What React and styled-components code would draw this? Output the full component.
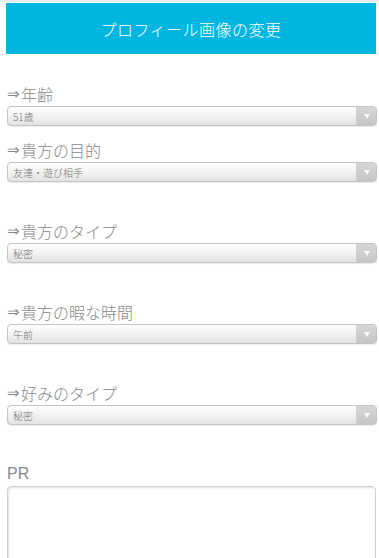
import React from 'react'
import styled, { createGlobalStyle } from 'styled-components'

const GlobalStyle = createGlobalStyle`
  html, body {
    margin: 0;
    padding: 0;
    background: #ffffff;
  }
  body {
    font-family: "Liberation Sans", Arial, "Noto Sans CJK JP", sans-serif;
  }
`;

const fields = [
  { label: '年齢', value: '51歳', spaced: false },
  { label: '貴方の目的', value: '友達・遊び相手', spaced: false },
  { label: '貴方のタイプ', value: '秘密', spaced: true },
  { label: '貴方の暇な時間', value: '午前', spaced: true },
  { label: '好みのタイプ', value: '秘密', spaced: true },
];

function App() {
  return (
    <Page>
      <GlobalStyle />
      <HeaderButton>プロフィール画像の変更</HeaderButton>
      <Form>
        {fields.map((f) => (
          <Field key={f.label} $spaced={f.spaced}>
            <Label>
              <Arrow>⇒</Arrow>
              {f.label}
            </Label>
            <SelectBox>
              <Value>{f.value}</Value>
              <ArrowBox>
                <Triangle />
              </ArrowBox>
            </SelectBox>
          </Field>
        ))}
        <Field $spaced>
          <Label $latin>PR</Label>
          <TextArea />
        </Field>
      </Form>
    </Page>
  )
}

const Page = styled.div`
  border-top: 2px solid #ececec;
  padding: 1px 2px 0 6px;
  min-height: 100vh;
  box-sizing: border-box;
  overflow: hidden;
`;

const HeaderButton = styled.div`
  width: 370px;
  height: 51px;
  background-color: #00b6e0;
  color: #ffffff;
  display: flex;
  align-items: center;
  justify-content: center;
  font-family: "Noto Sans CJK JP", sans-serif;
  font-size: 16px;
  letter-spacing: 0.5px;
  font-weight: 300;
`;

const Form = styled.div`
  display: flex;
  flex-direction: column;
  padding-top: 16px;
  padding-left: 1px;
`;

const Field = styled.div`
  display: flex;
  flex-direction: column;
  margin-top: ${(p) => (p.$spaced ? '38px' : '13px')};
`;

const Label = styled.div`
  display: flex;
  align-items: center;
  height: 22px;
  line-height: 22px;
  font-family: ${(p) =>
    p.$latin ? '"Liberation Sans", Arial, sans-serif' : '"Noto Sans CJK JP", sans-serif'};
  font-size: 16px;
  font-weight: 300;
  color: #888888;
  margin-bottom: 1px;
`;

const Arrow = styled.span`
  font-family: "DejaVu Sans", sans-serif;
  font-size: 15px;
  line-height: 1;
  margin-right: 1px;
`;

const SelectBox = styled.div`
  display: flex;
  height: 20px;
  box-sizing: border-box;
  border: 1px solid #c4c4c4;
  border-radius: 4px;
  overflow: hidden;
  background: linear-gradient(to bottom, #ffffff 0%, #f2f2f2 50%, #e2e2e2 100%);
  box-shadow: 0 1px 1px rgba(0, 0, 0, 0.08);
`;

const Value = styled.div`
  flex: 1;
  display: flex;
  align-items: center;
  padding-left: 5px;
  font-family: "Noto Sans CJK JP", sans-serif;
  font-size: 10px;
  font-weight: 300;
  color: #777777;
`;

const ArrowBox = styled.div`
  width: 19px;
  display: flex;
  align-items: center;
  justify-content: center;
  background: linear-gradient(to bottom, #d6d6d6 0%, #c6c6c6 100%);
  border-left: 1px solid #d0d0d0;
`;

const Triangle = styled.div`
  width: 0;
  height: 0;
  border-left: 3px solid transparent;
  border-right: 3px solid transparent;
  border-top: 5px solid #ffffff;
`;

const TextArea = styled.textarea`
  width: 369px;
  height: 90px;
  box-sizing: border-box;
  border: 1px solid #cfcfcf;
  border-radius: 4px;
  box-shadow: inset 1px 1px 2px rgba(0, 0, 0, 0.12);
  resize: none;
  outline: none;
`;

export default App
